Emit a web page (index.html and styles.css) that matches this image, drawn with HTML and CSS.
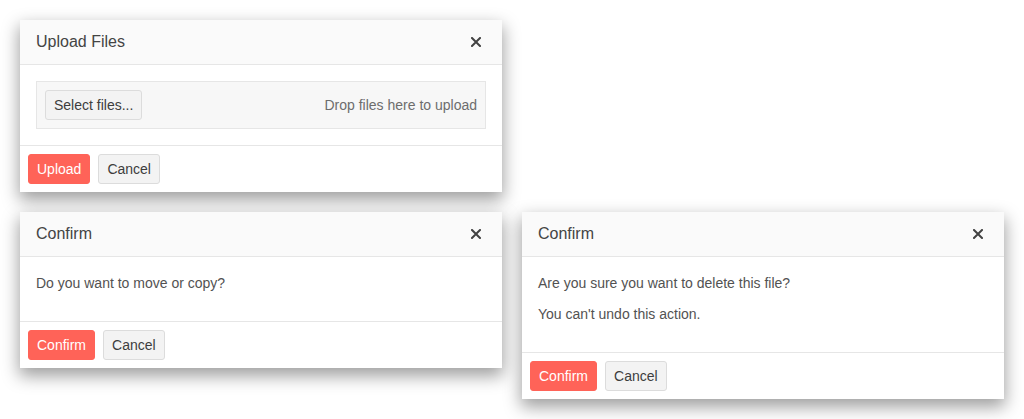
FILE: index.html
```html
<!DOCTYPE html>
<html lang="en">
<head>
<meta charset="utf-8">
<title>Dialogs</title>
<link rel="stylesheet" href="styles.css">
</head>
<body>
<div class="board">
  <div class="dialog">
    <div class="dialog-header">
      <span class="dialog-title">Upload Files</span>
      <button class="close" aria-label="Close"><svg width="10" height="10" viewBox="0 0 10 10"><path d="M1 1L9 9M9 1L1 9" stroke="#424242" stroke-width="2" stroke-linecap="square"/></svg></button>
    </div>
    <div class="dialog-body upload-body">
      <div class="dropzone">
        <button class="btn">Select files...</button>
        <span class="drop-hint">Drop files here to upload</span>
      </div>
    </div>
    <div class="dialog-footer">
      <button class="btn btn-primary">Upload</button>
      <button class="btn">Cancel</button>
    </div>
  </div>
  <div class="spacer"></div>
  <div class="dialog">
    <div class="dialog-header">
      <span class="dialog-title">Confirm</span>
      <button class="close" aria-label="Close"><svg width="10" height="10" viewBox="0 0 10 10"><path d="M1 1L9 9M9 1L1 9" stroke="#424242" stroke-width="2" stroke-linecap="square"/></svg></button>
    </div>
    <div class="dialog-body">
      <p>Do you want to move or copy?</p>
    </div>
    <div class="dialog-footer">
      <button class="btn btn-primary">Confirm</button>
      <button class="btn">Cancel</button>
    </div>
  </div>
  <div class="dialog">
    <div class="dialog-header">
      <span class="dialog-title">Confirm</span>
      <button class="close" aria-label="Close"><svg width="10" height="10" viewBox="0 0 10 10"><path d="M1 1L9 9M9 1L1 9" stroke="#424242" stroke-width="2" stroke-linecap="square"/></svg></button>
    </div>
    <div class="dialog-body">
      <p>Are you sure you want to delete this file?</p>
      <p>You can't undo this action.</p>
    </div>
    <div class="dialog-footer">
      <button class="btn btn-primary">Confirm</button>
      <button class="btn">Cancel</button>
    </div>
  </div>
</div>
</body>
</html>
```
FILE: styles.css
```css
html, body {
  margin: 0;
  padding: 0;
  background: #ffffff;
}
body {
  font-family: "Liberation Sans", Arial, sans-serif;
  font-size: 14px;
  line-height: 20px;
  color: #525252;
}
.board {
  display: grid;
  grid-template-columns: 482px 482px;
  column-gap: 20px;
  row-gap: 20px;
  padding: 20px;
  align-items: start;
}
.dialog {
  background: #ffffff;
  box-shadow: 0 7px 16px 1px rgba(0, 0, 0, 0.38);
  display: flex;
  flex-direction: column;
}
.dialog-header {
  display: flex;
  align-items: center;
  justify-content: space-between;
  background: #fafafa;
  border-bottom: 1px solid #e6e6e6;
  padding: 12px 21px 12px 16px;
  height: 20px;
}
.dialog-title {
  font-size: 16px;
  line-height: 20px;
  color: #444444;
}
.close {
  border: 0;
  background: none;
  padding: 0;
  margin: 0;
  width: 10px;
  height: 10px;
  display: flex;
}
.dialog-body {
  padding: 16px 16px 17px;
}
.dialog-body p {
  margin: 0 0 11px;
}
.upload-body {
  padding: 16px;
}
.dropzone {
  display: flex;
  align-items: center;
  justify-content: space-between;
  background: #f7f7f7;
  border: 1px solid #e6e6e6;
  padding: 8px;
}
.drop-hint {
  color: #6d6d6d;
}
.dialog-footer {
  display: flex;
  gap: 8px;
  border-top: 1px solid #e6e6e6;
  padding: 8px;
}
.btn {
  font-family: "Liberation Sans", Arial, sans-serif;
  font-size: 14px;
  line-height: 20px;
  padding: 4px 8px;
  border: 1px solid #dcdcdc;
  border-radius: 3px;
  background: #f3f3f3;
  color: #3d3d3d;
  margin: 0;
}
.btn-primary {
  background: #ff6358;
  border-color: #ff6358;
  color: #ffffff;
}
```
